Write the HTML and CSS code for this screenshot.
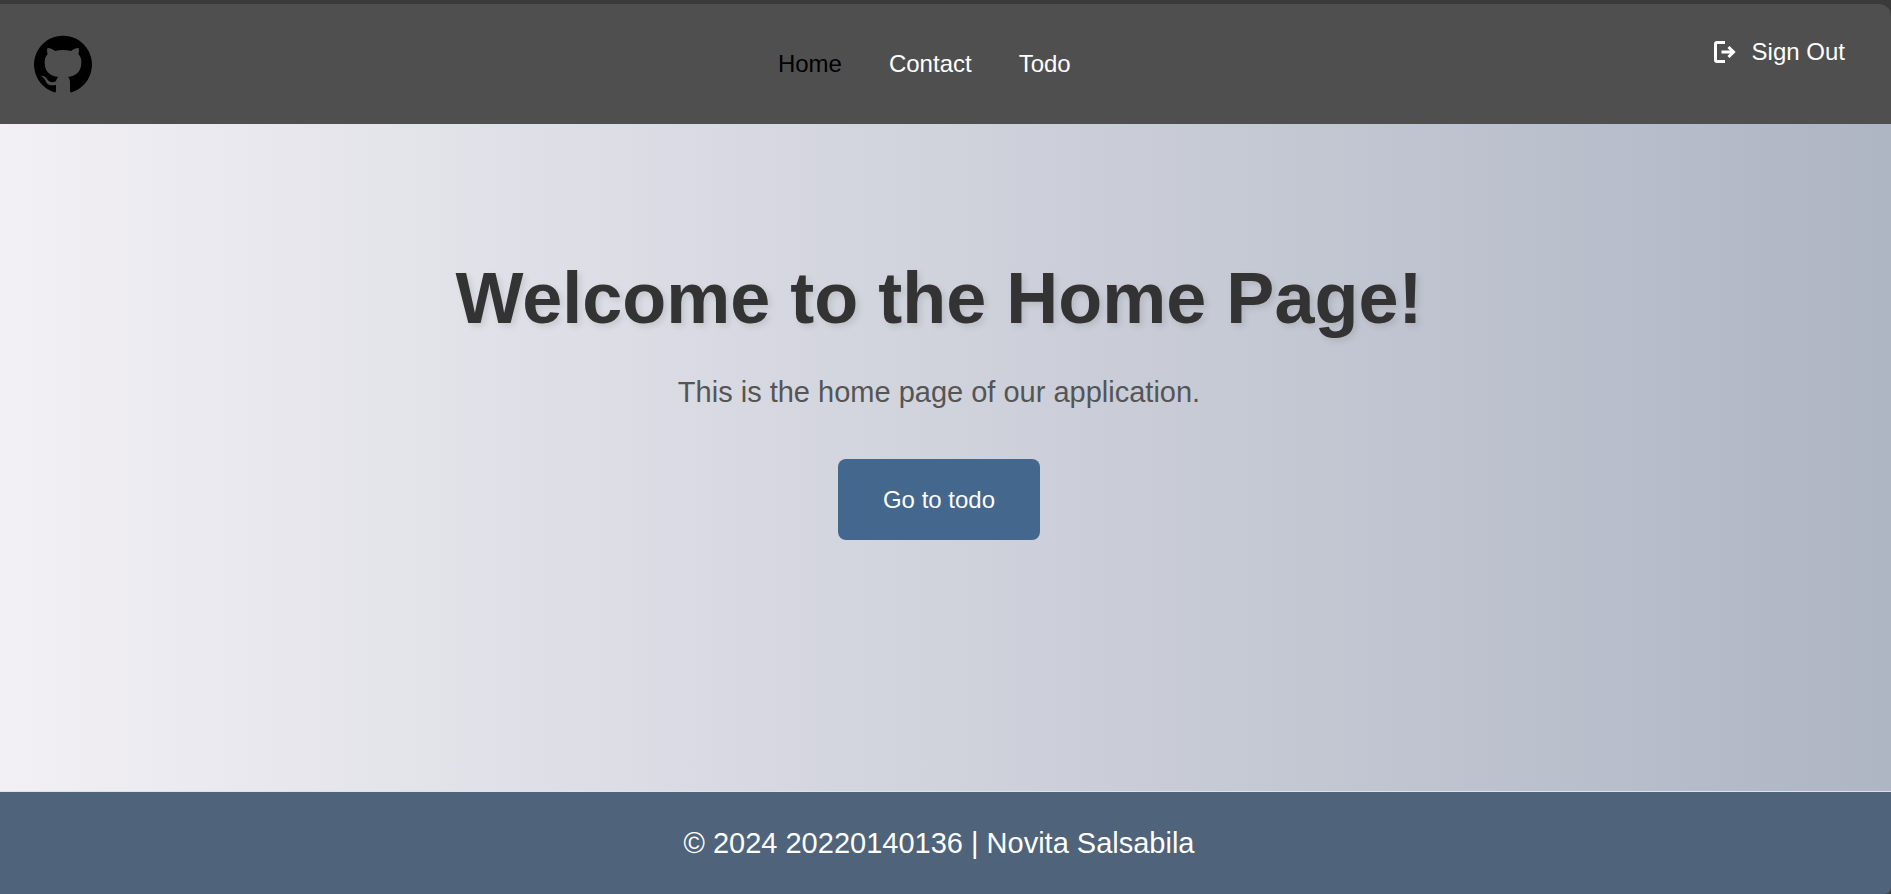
FILE: index.html
```html
<!DOCTYPE html>
<html lang="en">
<head>
<meta charset="utf-8">
<meta name="viewport" content="width=device-width, initial-scale=1">
<title>Home</title>
<link rel="stylesheet" href="styles.css">
</head>
<body>
<div class="page">
  <header class="header">
    <a class="logo" href="#" aria-label="GitHub">
      <svg class="logo-mark" viewBox="12 12 174 174" aria-hidden="true"><path d="M73 184A87 87 0 1 1 125 184Q120 185 120 179V155C120 146 118 141 114 138C136 135 154 125 154 94C154 83 151 75 145 69C148 61 147 54 146 51C140 50 131 54 123 60Q99 54 75 60C67 54 58 50 53 51C51 54 50 61 53 69C47 75 44 83 44 94C44 125 62 135 85 138C81 141 79 146 78 151C70 155 58 155 51 144C47 137 41 134 36 135C33 136 37 138 40 140C44 143 46 147 48 152C52 162 64 165 78 162V179Q78 185 73 184Z"/></svg>
    </a>
    <nav class="nav">
      <a class="nav-link nav-link-active" href="#">Home</a>
      <a class="nav-link" href="#">Contact</a>
      <a class="nav-link" href="#">Todo</a>
    </nav>
    <button class="sign-out" type="button">
      <svg class="sign-out-icon" viewBox="0 0 24 24" aria-hidden="true"><path d="M12 2.500H4a1.500 1.500 0 0 0-1.500 1.500v16a1.500 1.500 0 0 0 1.500 1.500h8M8.500 12H20M15.500 7l5 5-5 5"/></svg>
      Sign Out
    </button>
  </header>
  <main class="hero">
    <h1 class="hero-title">Welcome to the Home Page!</h1>
    <p class="hero-text">This is the home page of our application.</p>
    <button class="hero-button" type="button">Go to todo</button>
  </main>
  <footer class="footer">© 2024 20220140136 | Novita Salsabila</footer>
</div>
</body>
</html>
```
FILE: styles.css
```css
:root {
  --gutter: 13px;
}

* {
  box-sizing: border-box;
}

body {
  margin: 0;
  background: #3a3a3a;
  font-family: "Liberation Sans", Arial, sans-serif;
  font-size: 24px;
}

.page {
  display: flex;
  flex-direction: column;
  min-height: 100vh;
  padding-top: 4px;
}

.header {
  display: flex;
  justify-content: space-between;
  align-items: center;
  height: 120px;
  padding: 0 46px 0 34px;
  border-radius: 0 12px 0 0;
  background: #4f4f4f;
}

.logo {
  display: flex;
  padding-right: 44px;
}

.logo-mark {
  width: 58px;
  height: 58px;
}

.nav {
  display: flex;
  gap: 47px;
}

.nav-link {
  color: #fff;
  line-height: 36px;
  text-decoration: none;
}

.nav-link-active {
  color: #000;
}

.sign-out {
  display: flex;
  align-items: center;
  align-self: flex-start;
  gap: 15px;
  margin-top: 30px;
  padding: 0;
  border: 0;
  background: none;
  color: #fff;
  font: inherit;
  line-height: 36px;
}

.sign-out-icon {
  width: 24px;
  height: 24px;
  fill: none;
  stroke: #fff;
  stroke-width: 3;
}

.hero {
  display: flex;
  flex: 1;
  flex-direction: column;
  align-items: center;
  padding: 129px var(--gutter) 128px 0;
  background: linear-gradient(90deg, #f2f0f5, #aeb5c3);
}

.hero-title {
  margin: 0;
  color: #333;
  font-size: 72px;
  line-height: 90px;
  text-align: center;
  text-shadow: 3px 3px 6px rgba(0, 0, 0, 0.1);
}

.hero-text {
  margin: 27px 0 0;
  color: #555;
  font-size: 29px;
  line-height: 44px;
  text-align: center;
}

.hero-button {
  margin-top: 45px;
  padding: 27px 45px;
  border: 0;
  border-radius: 8px;
  background: #44678d;
  color: #fff;
  font: inherit;
  line-height: 27px;
}

.footer {
  padding: 29px var(--gutter) 29px 0;
  border-top: 1px solid #dee2e6;
  border-radius: 0 0 6px 0;
  background: #4f637a;
  color: #fff;
  font-size: 29px;
  line-height: 44px;
  text-align: center;
}
```
